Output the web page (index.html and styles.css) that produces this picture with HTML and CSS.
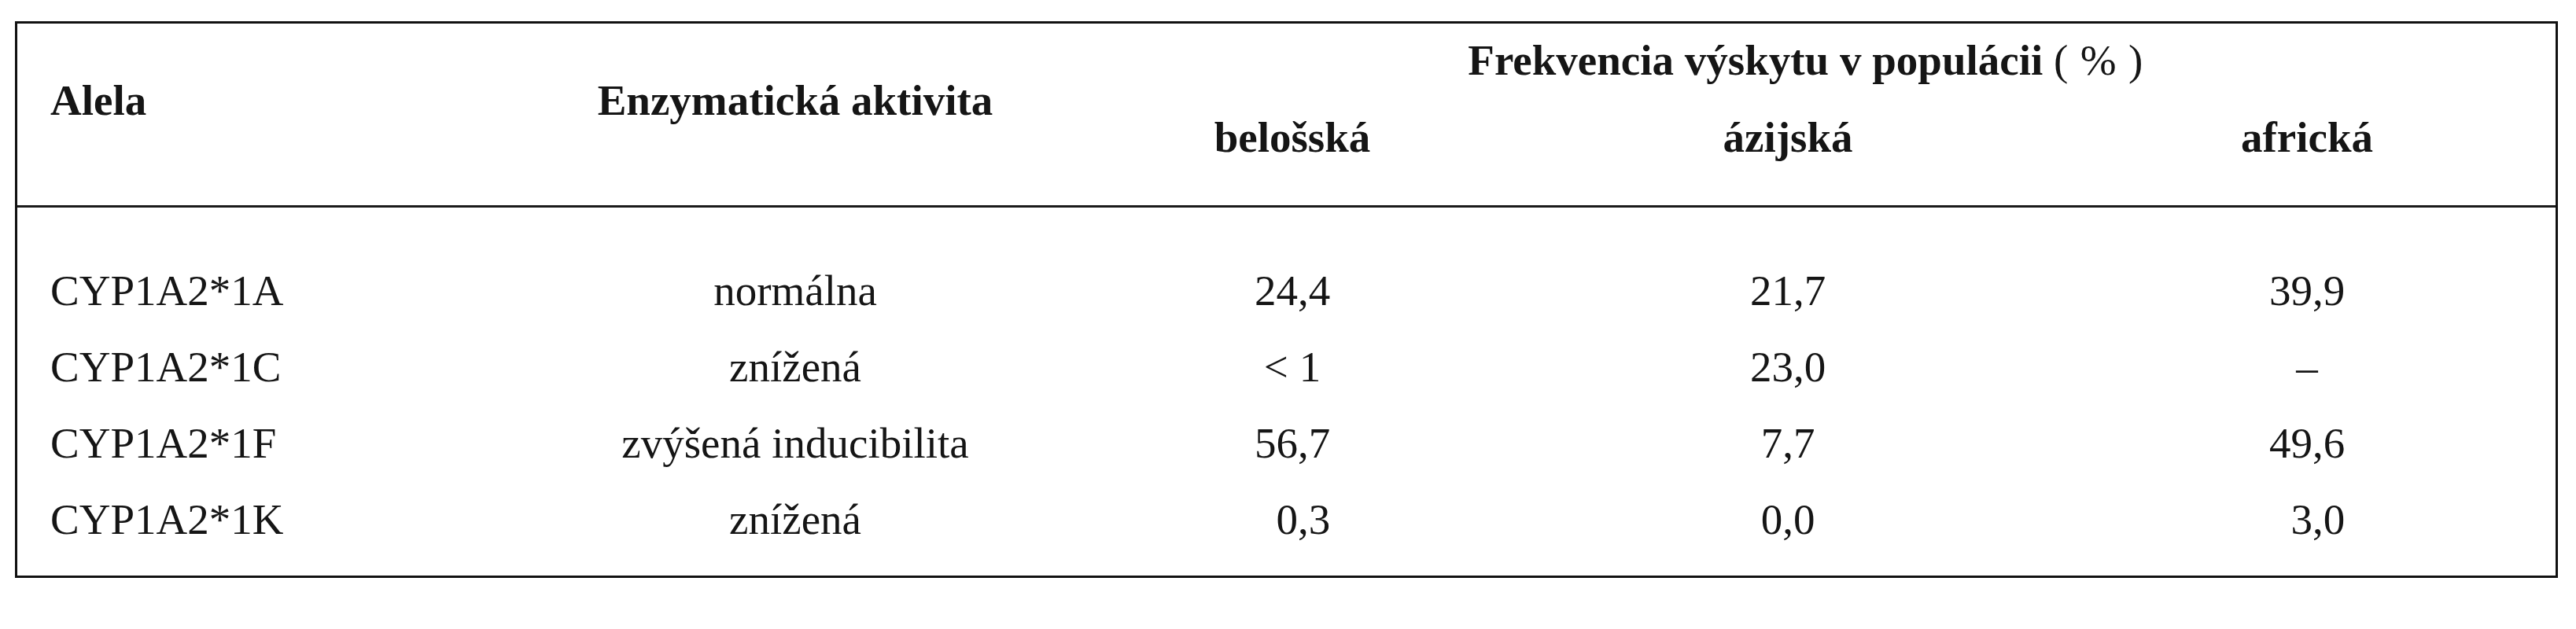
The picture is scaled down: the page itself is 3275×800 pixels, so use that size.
FILE: index.html
```html
<!DOCTYPE html>
<html lang="sk">
<head>
<meta charset="utf-8">
<title>CYP1A2 alely</title>
<link rel="stylesheet" href="styles.css">
</head>
<body>
<div class="tbl">
  <div class="head">
    <div class="h alela">Alela</div>
    <div class="h enz">Enzymatická aktivita</div>
    <div class="h freq">Frekvencia výskytu v populácii <span class="unit">(%)</span></div>
    <div class="h sub c3">belošská</div>
    <div class="h sub c4">ázijská</div>
    <div class="h sub c5">africká</div>
  </div>
  <div class="body">
    <div class="cell first">CYP1A2*1A</div>
    <div class="cell">normálna</div>
    <div class="cell">24,4</div>
    <div class="cell">21,7</div>
    <div class="cell">39,9</div>

    <div class="cell first">CYP1A2*1C</div>
    <div class="cell">znížená</div>
    <div class="cell">&lt; 1</div>
    <div class="cell">23,0</div>
    <div class="cell">–</div>

    <div class="cell first">CYP1A2*1F</div>
    <div class="cell">zvýšená inducibilita</div>
    <div class="cell">56,7</div>
    <div class="cell">7,7</div>
    <div class="cell">49,6</div>

    <div class="cell first">CYP1A2*1K</div>
    <div class="cell">znížená</div>
    <div class="cell"><span class="lead">0,3</span></div>
    <div class="cell">0,0</div>
    <div class="cell"><span class="lead">3,0</span></div>
  </div>
</div>
</body>
</html>
```
FILE: styles.css
```css
html, body {
  margin: 0;
  padding: 0;
  background: #ffffff;
}

body {
  font-family: "Liberation Serif", "Times New Roman", serif;
  font-size: 55px;
  color: #151515;
}

.tbl {
  box-sizing: border-box;
  width: 3233px;
  margin: 27px 0 0 19px;
  border: 3px solid #111111;
}

.head,
.body {
  display: grid;
  grid-template-columns: 643px 692px 572px 688px 632px;
}

.head {
  grid-template-rows: 90px 141px;
  border-bottom: 3px solid #1a1a1a;
}

.h {
  font-weight: bold;
  line-height: 66px;
  white-space: nowrap;
}

.alela {
  grid-column: 1;
  grid-row: 1 / 3;
  padding: 65px 0 0 42px;
}

.enz {
  grid-column: 2;
  grid-row: 1 / 3;
  padding-top: 65px;
  text-align: center;
}

.freq {
  grid-column: 3 / 6;
  grid-row: 1;
  padding-top: 14px;
  text-align: center;
}

.unit {
  font-weight: normal;
  letter-spacing: 0.28em;
}

.sub {
  grid-row: 2;
  padding-top: 22px;
  text-align: center;
}

.c3 { grid-column: 3; }
.c4 { grid-column: 4; }
.c5 { grid-column: 5; }

.body {
  grid-auto-rows: 97px;
  padding: 57px 0 23px 0;
}

.cell {
  line-height: 97px;
  text-align: center;
  white-space: nowrap;
}

.cell.first {
  text-align: left;
  padding-left: 42px;
}

.lead {
  padding-left: 0.5em;
}
```
